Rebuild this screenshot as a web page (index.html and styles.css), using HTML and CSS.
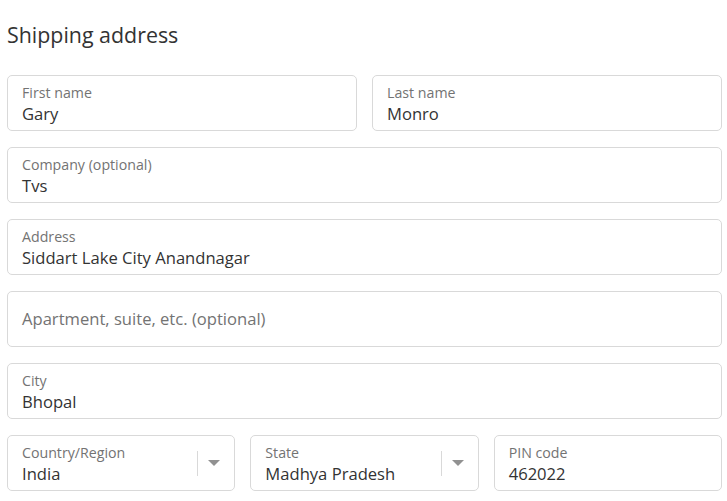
FILE: index.html
```html
<!DOCTYPE html>
<html>
<head>
<meta charset="utf-8">
<link rel="stylesheet" href="styles.css">
</head>
<body>
<section class="shipping">
  <h2 class="title">Shipping address</h2>
  <div class="grid">
    <div class="row two">
      <div class="field"><span class="label">First name</span><span class="value">Gary</span></div>
      <div class="field"><span class="label">Last name</span><span class="value">Monro</span></div>
    </div>
    <div class="row">
      <div class="field"><span class="label">Company (optional)</span><span class="value">Tvs</span></div>
    </div>
    <div class="row">
      <div class="field"><span class="label">Address</span><span class="value">Siddart Lake City Anandnagar</span></div>
    </div>
    <div class="row">
      <div class="field empty"><span class="placeholder">Apartment, suite, etc. (optional)</span></div>
    </div>
    <div class="row">
      <div class="field"><span class="label">City</span><span class="value">Bhopal</span></div>
    </div>
    <div class="row three">
      <div class="field select">
        <div class="text"><span class="label">Country/Region</span><span class="value">India</span></div>
        <div class="arrow"><span class="divider"></span><span class="caret"></span></div>
      </div>
      <div class="field select">
        <div class="text"><span class="label">State</span><span class="value">Madhya Pradesh</span></div>
        <div class="arrow"><span class="divider"></span><span class="caret"></span></div>
      </div>
      <div class="field"><span class="label">PIN code</span><span class="value">462022</span></div>
    </div>
  </div>
</section>
</body>
</html>
```
FILE: styles.css
```css
html, body {
  margin: 0;
  padding: 0;
  background: #ffffff;
}
body {
  font-family: "Open Sans", "Noto Sans", sans-serif;
  color: #333333;
}
.shipping {
  width: 715px;
  padding: 19px 0 0 7px;
}
.title {
  margin: 0 0 25px 0;
  font-size: 21.4px;
  font-weight: 400;
  line-height: 31px;
  color: #333333;
}
.grid {
  display: flex;
  flex-direction: column;
  gap: 16px;
}
.row {
  display: grid;
  grid-template-columns: 1fr;
  gap: 15px;
}
.row.two {
  grid-template-columns: 1fr 1fr;
}
.row.three {
  grid-template-columns: 1fr 1fr 1fr;
}
.field {
  box-sizing: border-box;
  height: 56px;
  border: 1px solid #d9d9d9;
  border-radius: 5px;
  padding: 7px 14px 0 14px;
  display: flex;
  flex-direction: column;
}
.field.empty {
  justify-content: center;
  padding-top: 0;
}
.label {
  font-size: 14.2px;
  line-height: 19px;
  color: #737373;
}
.value {
  font-size: 16.6px;
  line-height: 22px;
  margin-top: 1px;
  color: #333333;
}
.placeholder {
  font-size: 16.6px;
  line-height: 22px;
  color: #737373;
}
.field.select {
  flex-direction: row;
  padding-right: 0;
}
.text {
  flex: 1;
  display: flex;
  flex-direction: column;
}
.arrow {
  display: flex;
  align-items: center;
  margin-top: -7px;
  width: 37px;
}
.divider {
  width: 1px;
  height: 25px;
  background: #d9d9d9;
}
.caret {
  margin-left: 10px;
  width: 0;
  height: 0;
  border-left: 6px solid transparent;
  border-right: 6px solid transparent;
  border-top: 6px solid #919191;
}
```
